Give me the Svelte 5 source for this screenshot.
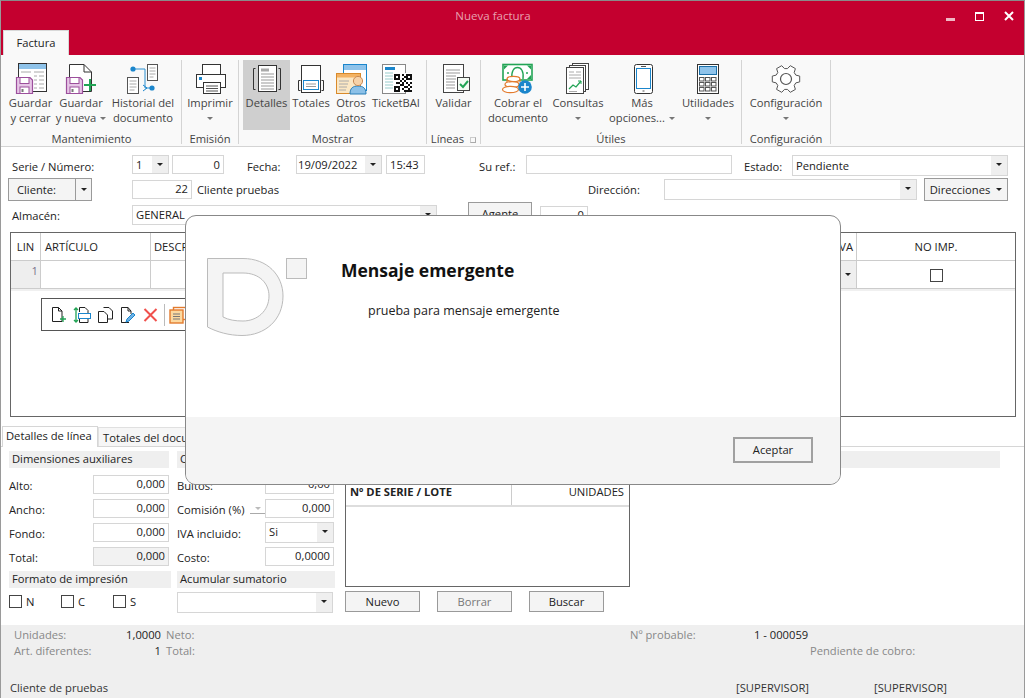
<script lang="ts">
    const GROUPS = [
        { name: 'Mantenimiento', width: 180, pad: 3, items: [
            { id: 'save', lines: ['Guardar', 'y cerrar'], w: 51 },
            { id: 'savenew', lines: ['Guardar', 'y nueva'], w: 50, caret: 'inline' },
            { id: 'history', lines: ['Historial del', 'documento'], w: 74 },
        ] },
        { name: 'Emisión', width: 57, pad: 0, items: [
            { id: 'print', lines: ['Imprimir'], w: 56, caret: 'below' },
        ] },
        { name: 'Mostrar', width: 188, pad: 4, items: [
            { id: 'details', lines: ['Detalles'], w: 47, active: true },
            { id: 'totals', lines: ['Totales'], w: 42 },
            { id: 'other', lines: ['Otros', 'datos'], w: 38 },
            { id: 'ticket', lines: ['TicketBAI'], w: 52 },
        ] },
        { name: 'Líneas', width: 54, pad: 0, launcher: true, items: [
            { id: 'validate', lines: ['Validar'], w: 53 },
        ] },
        { name: 'Útiles', width: 261, pad: 8, items: [
            { id: 'pay', lines: ['Cobrar el', 'documento'], w: 58 },
            { id: 'query', lines: ['Consultas'], w: 62, caret: 'below' },
            { id: 'phone', lines: ['Más', 'opciones...'], w: 66, caret: 'inline' },
            { id: 'calc', lines: ['Utilidades'], w: 66, caret: 'below' },
        ] },
        { name: 'Configuración', width: 89, pad: 0, items: [
            { id: 'gear', lines: ['Configuración'], w: 88, caret: 'below' },
        ] },
    ];

    // six toothed outline for the settings icon
    function gearPath(cx: number, cy: number, rOut: number, rIn: number): string {
        const pts: string[] = [];
        for (let i = 0; i < 6; i++) {
            const a = (i * Math.PI) / 3;
            const step = Math.PI / 3;
            const at = (r: number, off: number) =>
                `${(cx + r * Math.cos(a + off)).toFixed(1)} ${(cy + r * Math.sin(a + off)).toFixed(1)}`;
            pts.push(at(rIn, -step * 0.36), at(rOut, -step * 0.2), at(rOut, step * 0.2), at(rIn, step * 0.36));
        }
        return 'M' + pts.join(' L') + ' Z';
    }

    const qrCells = [
        [0,0],[1,0],[2,0],[4,0],[6,0],[7,0],[8,0],[0,1],[2,1],[5,1],[6,1],[8,1],[0,2],[1,2],[2,2],[4,2],[6,2],[7,2],[8,2],
        [3,3],[5,3],[1,4],[2,4],[4,4],[6,4],[8,4],[3,5],[4,5],[7,5],[0,6],[1,6],[2,6],[5,6],[6,6],[8,6],[0,7],[2,7],[4,7],[7,7],[0,8],[1,8],[2,8],[5,8],[6,8],[7,8],[8,8],
    ];
</script>

{#snippet floppy()}
    <path d="M2.5 15.5H16L18.5 18V31.5H2.5Z" fill="#e6c6e6" stroke="#9c4f9c" stroke-width="1.2" />
    <rect x="6" y="15.5" width="9" height="6" fill="#fff" stroke="#9c4f9c" />
    <rect x="6" y="25" width="9" height="6.5" fill="#fff" stroke="#9c4f9c" />
    <rect x="7.5" y="27" width="2" height="3" fill="#777" />
{/snippet}

{#snippet icon(id: string)}
    <svg class="ricon" width="34" height="34" viewBox="0 0 34 34" fill="none">
        {#if id === 'save'}
            <rect x="4.5" y="1.5" width="28" height="28" fill="#fff" stroke="#333" />
            <rect x="5" y="2" width="27" height="5" fill="#8fc3ea" />
            <path d="M7 10h10M20 10h10M20 14h3M25 14h5M20 18h3M25 18h5M20 22h3M25 22h5M20 26h3M25 26h5" stroke="#aaa" />
            {@render floppy()}
        {:else if id === 'savenew'}
            <path d="M5.5 2.5H20L27.5 10V29.5H5.5Z" fill="#fff" stroke="#333" />
            <path d="M20 2.5V10H27.5" stroke="#333" />
            {@render floppy()}
            <path d="M26 17V29M20 23H32" stroke="#22a455" stroke-width="2" />
        {:else if id === 'history'}
            <rect x="21.5" y="2.5" width="10" height="16" fill="#fff" stroke="#555" />
            <path d="M23.5 6h6M23.5 9h6M23.5 12h6M23.5 15h4" stroke="#aaa" />
            <rect x="1.5" y="15.5" width="11" height="16" fill="#fff" stroke="#555" />
            <path d="M3.5 19h7M3.5 22h7M3.5 25h7M3.5 28h5" stroke="#aaa" />
            <path d="M7 7H19V26H26" stroke="#2a8fd0" />
            <circle cx="7" cy="7" r="2.6" fill="#1b86cc" />
            <circle cx="26" cy="26" r="2.6" fill="#1b86cc" />
            <path d="M17 23l4 3-4 3" stroke="#1b86cc" />
        {:else if id === 'print'}
            <rect x="9.5" y="2.5" width="18" height="10" fill="#fff" stroke="#333" />
            <rect x="3.5" y="12.5" width="29" height="13" fill="#fff" stroke="#333" />
            <rect x="6" y="15" width="3" height="3" fill="#1b86cc" />
            <rect x="10.5" y="20.5" width="17" height="11" fill="#fff" stroke="#333" />
            <path d="M13 24h12M13 26.5h12M13 29h12" stroke="#555" />
        {:else if id === 'details'}
            <path d="M5.5 6.5H3.5V27.5H5.5M28.5 6.5H30.5V27.5H28.5" stroke="#333" />
            <rect x="8.5" y="3.5" width="18" height="26" fill="#fff" stroke="#333" />
            <rect x="11" y="6.5" width="8" height="3" fill="#aaa" />
            <path d="M11 12h13M11 15h13M11 18h13M11 21h13M11 24h13M11 27h13" stroke="#999" />
        {:else if id === 'totals'}
            <path d="M6.5 18.5H4.5V28.5H6.5M27.5 18.5H29.5V28.5H27.5" stroke="#333" />
            <rect x="7.5" y="3.5" width="19" height="27" fill="#fff" stroke="#333" />
            <rect x="9.5" y="18.5" width="15" height="9" fill="#fff" stroke="#1b86cc" />
            <path d="M12 22h10M12 24.5h10" stroke="#999" />
        {:else if id === 'other'}
            <rect x="9.5" y="2.5" width="23" height="26" fill="#fff" stroke="#1b86cc" />
            <rect x="10" y="3" width="22" height="5" fill="#8fc3ea" />
            <rect x="2.5" y="11.5" width="24" height="20" fill="#fbe7c4" stroke="#d98a2b" />
            <rect x="3" y="12" width="23" height="3.5" fill="#f3b263" />
            <path d="M5 19h10M5 22h9M5 25h8M5 28h7" stroke="#aaa" />
            <path d="M16 32C16 26 19 24 24 24S32 26 32 32Z" fill="#8cc1e8" stroke="#2a7fb8" />
            <circle cx="24" cy="19" r="4.6" fill="#f7d2a8" stroke="#c98a55" />
        {:else if id === 'ticket'}
            <rect x="3.5" y="2.5" width="23" height="29" fill="#fff" stroke="#888" />
            <rect x="6" y="5" width="10" height="3" fill="#1b86cc" />
            <path d="M6 11h8M6 14h8M6 17h8M6 20h8M6 23h8M6 26h8" stroke="#9cc" />
            <rect x="14" y="11" width="19" height="19" fill="#fff" />
            {#each qrCells as [cx, cy]}
                <rect x={15 + cx * 2} y={12 + cy * 2} width="2" height="2" fill="#111" />
            {/each}
        {:else if id === 'validate'}
            <rect x="6.5" y="2.5" width="20" height="28" fill="#fff" stroke="#444" />
            <path d="M9 8h14M9 11h14M9 14h10M9 17h10M9 20h9M9 23h9M9 26h9" stroke="#999" />
            <rect x="20.5" y="15.5" width="12" height="13" fill="#f4fbf4" stroke="#444" />
            <path d="M23 22l3 3 5-6" stroke="#22a455" stroke-width="2" />
        {:else if id === 'pay'}
            <rect x="2" y="2.5" width="29" height="15.5" fill="#fff" stroke="#22a455" stroke-width="1.6" />
            <path d="M11 17C10 9 13 5.5 16.5 5.5S23 9 22 17" stroke="#22a455" stroke-width="1.4" />
            <path d="M3 3.5h4l-4 4ZM30 3.5h-4l4 4ZM30 17h-4l4-4Z" fill="#22a455" />
            <circle cx="7" cy="11" r="1" fill="#22a455" />
            <circle cx="26" cy="11" r="1" fill="#22a455" />
            <ellipse cx="12.5" cy="17" rx="6.5" ry="2.6" fill="#fff" stroke="#e37b2e" stroke-width="1.2" />
            <path d="M6 17v3M19 17v3" stroke="#e37b2e" stroke-width="1.2" />
            <ellipse cx="11" cy="22.5" rx="7" ry="2.8" fill="#fff" stroke="#e37b2e" stroke-width="1.2" />
            <ellipse cx="9.5" cy="27.5" rx="8" ry="3.2" fill="#fff" stroke="#e37b2e" stroke-width="1.2" />
            <circle cx="24" cy="25" r="6.8" fill="#1b86cc" />
            <path d="M24 21V29M20 25H28" stroke="#fff" stroke-width="1.6" />
        {:else if id === 'query'}
            <rect x="11.5" y="1.5" width="16" height="26" fill="#fff" stroke="#444" />
            <rect x="8.5" y="3.5" width="16" height="26" fill="#fff" stroke="#444" />
            <rect x="5.5" y="5.5" width="17" height="26" fill="#fff" stroke="#444" />
            <path d="M8 10h5M15 10h5M8 13h12M8 16h12M8 29.5h8" stroke="#aaa" />
            <path d="M8 27l4-4 3 2 5-6" stroke="#22a455" stroke-width="1.3" />
            <path d="M17 19h3v3" stroke="#22a455" />
        {:else if id === 'phone'}
            <rect x="9.5" y="2.5" width="18" height="29" rx="2" fill="#fff" stroke="#333" />
            <rect x="11.5" y="6.5" width="14" height="20" fill="#fff" stroke="#1b86cc" />
            <path d="M16 4.5h5M17.5 29h2" stroke="#555" />
        {:else if id === 'calc'}
            <rect x="6.5" y="2.5" width="21" height="29" fill="#fff" stroke="#333" />
            <rect x="8.5" y="4.5" width="17" height="8" fill="#8fc3ea" stroke="#1b6fa8" />
            {#each [15.5, 20.5, 25.5] as y}
                {#each [8.5, 14.5, 20.5] as x}
                    <rect {x} {y} width="4.5" height="3.5" fill="#fff" stroke="#555" />
                {/each}
            {/each}
        {:else if id === 'gear'}
            <path d={gearPath(17, 17, 14, 10.5)} fill="#fff" stroke="#555" stroke-linejoin="round" />
            <circle cx="17" cy="17" r="5.5" stroke="#555" stroke-width="1.2" />
        {/if}
    </svg>
{/snippet}

{#snippet combo(value: string, cls: string)}
    <div class="field combo {cls}"><span class="val">{value}</span><span class="arrow"></span></div>
{/snippet}

<div class="window">
    <header class="titlebar">
        <div class="title">Nueva factura</div>
        <div class="controls">
            <span class="min"></span>
            <span class="max"></span>
            <svg width="10" height="10" viewBox="0 0 10 10"><path d="M1 1L9 9M9 1L1 9" stroke="#fff" stroke-width="2" /></svg>
        </div>
        <div class="tab-main">Factura</div>
    </header>

    <section class="ribbon">
        {#each GROUPS as g}
            <div class="group" style="width:{g.width}px">
                <div class="items" style="padding-left:{g.pad}px">
                    {#each g.items as it}
                        <div class="rbtn" class:active={it.active} style="width:{it.w}px">
                            {@render icon(it.id)}
                            <div class="rlabel">
                                {#each it.lines as line, i}
                                    <div>{line}{#if it.caret === 'inline' && i === it.lines.length - 1}<span class="caret inl"></span>{/if}</div>
                                {/each}
                                {#if it.caret === 'below'}<div class="caret-row"><span class="caret"></span></div>{/if}
                            </div>
                        </div>
                    {/each}
                </div>
                <div class="gname">{g.name}{#if g.launcher}<span class="launcher"></span>{/if}</div>
            </div>
        {/each}
    </section>

    <section class="form">
        <div class="row r1">
            <span class="lbl l-serie">Serie / Número:</span>
            {@render combo('1', 'c-serie')}
            <div class="field num f-num">0</div>
            <span class="lbl l-fecha">Fecha:</span>
            {@render combo('19/09/2022', 'c-date')}
            <div class="field f-time">15:43</div>
            <span class="lbl l-ref">Su ref.:</span>
            <div class="field f-ref"></div>
            <span class="lbl l-estado">Estado:</span>
            {@render combo('Pendiente', 'c-estado')}
        </div>
        <div class="row r2">
            <div class="btn split b-cliente"><span>Cliente:</span><span class="split-arrow"><i class="arrow-ico"></i></span></div>
            <div class="field num f-cli">22</div>
            <span class="lbl l-cli">Cliente pruebas</span>
            <span class="lbl l-dir">Dirección:</span>
            {@render combo('', 'c-dir')}
            <div class="btn b-dirs">Direcciones<i class="arrow-ico"></i></div>
        </div>
        <div class="row r3">
            <span class="lbl l-alm">Almacén:</span>
            {@render combo('GENERAL', 'c-alm')}
            <div class="btn b-agente">Agente</div>
            <div class="field num f-agente">0</div>
        </div>
    </section>

    <section class="lines">
        <div class="lhead">
            <div class="lin">LIN</div>
            <div class="art">ARTÍCULO</div>
            <div class="desc">DESCRIPCIÓN</div>
            <div class="iva">IVA</div>
            <div class="noimp">NO IMP.</div>
        </div>
        <div class="lrow">
            <div class="lin n">1</div>
            <div class="art"></div>
            <div class="desc"></div>
            <div class="iva"><span class="iva-arrow"><i class="arrow-ico"></i></span></div>
            <div class="noimp"><span class="check dark"></span></div>
        </div>
        <div class="toolbar">
            <svg width="16" height="18" viewBox="0 0 16 18" fill="none"><path d="M1.5 1.5H7.5L11 5V15.5H1.5Z" stroke="#222" /><path d="M7.5 1.5V5H11" stroke="#222" /><path d="M12 10V16M9 13H15" stroke="#22a455" stroke-width="1.3" /></svg>
            <svg width="18" height="18" viewBox="0 0 18 18" fill="none"><path d="M6.5 1.5H12L15 4.5V7M6.5 1.5V6M6.5 13V16.5H15V13" stroke="#222" /><rect x="5.5" y="7.5" width="12" height="5" stroke="#1b86cc" /><path d="M3 2V15M1 4L3 2L5 4M1 14L3 16L5 14" stroke="#22a455" stroke-width="1.3" /></svg>
            <svg width="17" height="18" viewBox="0 0 17 18" fill="none"><path d="M6.5 1.5H12L15.5 5V13H11" stroke="#222" /><path d="M1.5 5.5H7L10.5 9V16.5H1.5Z" fill="#fff" stroke="#222" /></svg>
            <svg width="17" height="18" viewBox="0 0 17 18" fill="none"><path d="M1.5 1.5H8L11 5V8M9 16.5H1.5Z" stroke="#222" /><path d="M1.5 1.5V16.5M8 1.5V5H11" stroke="#222" /><path d="M6 16L7 13L13 7L15 9L9 15Z" fill="#6db1e6" stroke="#1b86cc" /></svg>
            <svg width="15" height="18" viewBox="0 0 15 18" fill="none"><path d="M1.5 3L13.5 15M13.5 3L1.5 15" stroke="#f0504c" stroke-width="2" /></svg>
            <span class="tsep"></span>
            <svg width="22" height="18" viewBox="0 0 22 18" fill="none"><rect x="4.5" y="1.5" width="14" height="12" fill="#fff" stroke="#e37b2e" stroke-width="1.4" /><rect x="1" y="4" width="13" height="13" fill="#fcd9a0" stroke="#e37b2e" stroke-width="1.4" /><path d="M4 8h7M4 10.5h7M4 13h7" stroke="#777" /></svg>
        </div>
    </section>

    <section class="tabs">
        <div class="tab on">Detalles de línea</div>
        <div class="tab">Totales del documento</div>
    </section>

    <section class="details">
        <div class="col-a">
            <div class="sect">Dimensiones auxiliares</div>
            <div class="frow"><span>Alto:</span><div class="field num">0,000</div></div>
            <div class="frow"><span>Ancho:</span><div class="field num">0,000</div></div>
            <div class="frow"><span>Fondo:</span><div class="field num">0,000</div></div>
            <div class="frow"><span>Total:</span><div class="field num off">0,000</div></div>
            <div class="sect s2">Formato de impresión</div>
            <div class="checks">
                <label><span class="check"></span>N</label>
                <label><span class="check"></span>C</label>
                <label><span class="check"></span>S</label>
            </div>
        </div>
        <div class="col-b">
            <div class="sect">Comercial</div>
            <div class="frow"><span>Bultos:</span><div class="field num">0,00</div></div>
            <div class="frow"><span>Comisión (%)<i class="mini"></i></span><div class="field num">0,000</div></div>
            <div class="frow"><span>IVA incluido:</span>{@render combo('Si', 'c-iva')}</div>
            <div class="frow"><span>Costo:</span><div class="field num">0,0000</div></div>
            <div class="sect s2">Acumular sumatorio</div>
            {@render combo('', 'c-acum')}
        </div>
        <div class="col-c">
            <div class="serials">
                <div class="shead"><b>Nº DE SERIE / LOTE</b><span>UNIDADES</span></div>
            </div>
            <div class="sbtns">
                <div class="btn">Nuevo</div>
                <div class="btn dim">Borrar</div>
                <div class="btn">Buscar</div>
            </div>
        </div>
        <div class="col-d"><div class="sect"></div></div>
    </section>

    <footer class="foot">
        <div class="frow1">
            <span class="k w-k">Unidades:</span><span class="v w-v">1,0000</span><span class="k w-n">Neto:</span>
            <span class="k w-p">Nº probable:</span><span class="v2">1 - 000059</span>
        </div>
        <div class="frow1">
            <span class="k w-k">Art. diferentes:</span><span class="v w-v">1</span><span class="k w-n">Total:</span>
            <span class="k pend">Pendiente de cobro:</span>
        </div>
        <div class="frow3">
            <span class="cli">Cliente de pruebas</span>
            <span class="sup s-a">[SUPERVISOR]</span>
            <span class="sup s-b">[SUPERVISOR]</span>
        </div>
    </footer>

    <div class="dialog">
        <div class="dbody">
            <svg class="logo" width="101" height="79" viewBox="0 0 101 79">
                <path fill-rule="evenodd" d="M.5.5H36C60 .5 76 17 76 38C76 62 58 77.5 35 77.5C22 77.5 10 74 .5 69ZM16 15V59C22 62 28 63 36 63C50 63 62 53 62 38C62 25 52 15 36 15Z" fill="#f4f4f4" stroke="#bbb" />
                <rect x="79.5" y=".5" width="20" height="20" fill="#f4f4f4" stroke="#bbb" />
            </svg>
            <div class="dtext">
                <div class="dtitle">Mensaje emergente</div>
                <div class="dmsg">prueba para mensaje emergente</div>
            </div>
        </div>
        <div class="dfoot"><div class="accept">Aceptar</div></div>
    </div>
</div>

<style>
    :global(body) {
        margin: 0;
        background: #fff;
    }

    * {
        box-sizing: border-box;
    }

    .window {
        position: relative;
        width: 1025px;
        height: 698px;
        overflow: hidden;
        background: #fff;
        border-top: 1px solid #8a8a8a;
        border-left: 1px solid #9a9a9a;
        border-right: 1px solid #9a9a9a;
        font-family: "Open Sans", "Noto Sans", sans-serif;
        font-size: 11.2px;
        color: #222;
    }

    /* title bar */
    .titlebar {
        position: relative;
        height: 54px;
        background: #c4002f;
    }

    .title {
        padding-top: 7px;
        text-align: center;
        color: #e8a0b0;
        font-size: 11.5px;
        margin-left: -39px;
    }

    .controls {
        position: absolute;
        top: 10px;
        right: 10px;
        display: flex;
        align-items: center;
        gap: 20px;
    }

    .min {
        width: 9px;
        height: 3px;
        margin-top: 6px;
        background: #f0b8c4;
    }

    .max {
        width: 9px;
        height: 9px;
        border: 1px solid #fff;
        border-top-width: 2px;
    }

    .tab-main {
        position: absolute;
        left: 2px;
        bottom: 0;
        width: 66px;
        height: 25px;
        line-height: 24px;
        text-align: center;
        background: #f9f9f9;
        border: 1px solid #d8d8d8;
        border-bottom: 0;
        color: #222;
    }

    /* ribbon */
    .ribbon {
        display: flex;
        height: 92px;
        padding: 5px 0 0 1px;
        background: #f9f9f9;
        border-bottom: 1px solid #d4d4d4;
    }

    .group {
        position: relative;
        height: 84px;
        border-right: 1px solid #d4d4d4;
    }

    .items {
        display: flex;
        height: 70px;
    }

    .rbtn {
        display: flex;
        flex-direction: column;
        align-items: center;
        padding-top: 2px;
        flex: none;
        color: #444;
        line-height: 15px;
    }

    .rbtn.active {
        background: #cfcfcf;
    }

    .ricon {
        flex: none;
    }

    .rlabel {
        margin-top: -1px;
        text-align: center;
        white-space: nowrap;
    }

    .caret-row {
        height: 15px;
    }

    .caret {
        display: inline-block;
        width: 0;
        height: 0;
        border-left: 3px solid transparent;
        border-right: 3px solid transparent;
        border-top: 3px solid #777;
        vertical-align: 2px;
    }

    .caret.inl {
        margin-left: 4px;
    }

    .gname {
        position: absolute;
        left: 0;
        right: 0;
        bottom: -1px;
        text-align: center;
        color: #444;
        line-height: 12px;
    }

    .launcher {
        display: inline-block;
        width: 6px;
        height: 6px;
        margin-left: 6px;
        border: 1px solid #aaa;
        border-top-color: #ccc;
        border-left-color: #ccc;
    }

    /* header form */
    .form {
        height: 85px;
        padding-top: 8px;
    }

    .row {
        display: flex;
    }

    .r1 {
        height: 22px;
        padding-left: 11px;
        align-items: flex-start;
    }

    .r1 .lbl {
        line-height: 24px;
    }

    .r1 .field {
        line-height: 17px;
    }

    .r2 {
        height: 24px;
        padding-left: 7px;
        align-items: center;
    }

    .r3 {
        height: 26px;
        padding: 2px 0 0 11px;
        align-items: center;
    }

    .lbl {
        flex: none;
        white-space: nowrap;
    }

    .field {
        flex: none;
        height: 19px;
        line-height: 16px;
        padding: 0 3px;
        border: 1px solid #d6d6d6;
        background: #fff;
        white-space: nowrap;
    }

    .num {
        text-align: right;
    }

    .off {
        background: #f2f2f2;
    }

    .combo {
        display: flex;
        align-items: stretch;
        padding: 0 0 0 3px;
    }

    .combo .val {
        flex: 1;
        align-self: center;
    }

    .arrow {
        position: relative;
        width: 16px;
        background: #efefef;
    }

    .arrow::after,
    .arrow-ico {
        content: '';
        display: inline-block;
        width: 0;
        height: 0;
        border-left: 3px solid transparent;
        border-right: 3px solid transparent;
        border-top: 3px solid #222;
    }

    .arrow::after {
        position: absolute;
        left: 5px;
        top: 7px;
    }

    .btn {
        flex: none;
        display: flex;
        align-items: center;
        justify-content: center;
        height: 23px;
        border: 1px solid #9a9a9a;
        background: #f4f4f4;
        white-space: nowrap;
    }

    .l-serie { width: 120px; }
    .c-serie { width: 37px; }
    .f-num { width: 52px; margin-left: 3px; }
    .l-fecha { width: 49px; margin-left: 23px; }
    .c-date { width: 86px; padding-left: 1px; }
    .f-time { width: 39px; margin-left: 4px; }
    .l-ref { width: 47px; margin-left: 54px; }
    .f-ref { width: 206px; }
    .l-estado { width: 48px; margin-left: 12px; }
    .c-estado { width: 216px; height: 21px; }

    .b-cliente { width: 84px; justify-content: flex-start; padding-left: 8px; }
    .split span:first-child { flex: 1; }
    .split-arrow {
        width: 16px;
        height: 100%;
        display: flex;
        align-items: center;
        justify-content: center;
        border-left: 1px solid #9a9a9a;
    }
    .f-cli { width: 60px; margin-left: 40px; }
    .l-cli { width: 180px; margin-left: 5px; }
    .l-dir { width: 76px; margin-left: 211px; }
    .c-dir { width: 253px; height: 21px; }
    .b-dirs { width: 84px; margin-left: 7px; }
    .b-dirs .arrow-ico { margin-left: 6px; }

    .l-alm { width: 120px; }
    .c-alm { width: 305px; height: 20px; }
    .b-agente { width: 64px; margin: -3px 0 0 31px; }
    .f-agente { width: 48px; margin-left: 8px; }

    /* line grid */
    .lines {
        position: relative;
        height: 185px;
        margin: 0 8px 0 9px;
        border: 1px solid #666;
    }

    .lhead,
    .lrow {
        display: flex;
    }

    .lhead {
        height: 28px;
        line-height: 27px;
        border-bottom: 1px solid #ccc;
    }

    .lrow {
        height: 30px;
        border-bottom: 2px solid #f0f0f0;
    }

    .lhead > div,
    .lrow > div {
        height: 100%;
        flex: none;
        border-right: 1px solid #ccc;
    }

    .lrow > div {
        border-bottom: 1px solid #ccc;
    }

    .lin { width: 30px; text-align: center; }
    .lin.n { text-align: right; padding: 0 2px 0 0; background: #eee; color: #7a6f8a; line-height: 20px; }
    .art { width: 110px; padding-left: 4px; }
    .desc { width: 680px; padding-left: 3px; }
    .iva { width: 26px; text-align: right; padding-right: 3px; }
    .lrow .iva { padding: 0; display: flex; justify-content: flex-end; }
    .iva-arrow { width: 16px; background: #efefef; display: flex; align-items: center; justify-content: center; }
    .noimp {
        width: 158px;
        text-align: center;
        border-right: 0 !important;
    }
    .lrow .noimp { display: flex; align-items: flex-start; justify-content: center; padding-top: 8px; }

    .check {
        display: inline-block;
        width: 13px;
        height: 13px;
        border: 1px solid #444;
        background: #fff;
    }

    .toolbar {
        position: absolute;
        left: 30px;
        top: 65px;
        width: 220px;
        height: 33px;
        display: flex;
        align-items: center;
        gap: 6px;
        padding-left: 9px;
        border: 1px solid #555;
        background: #fff;
    }

    .tsep {
        width: 1px;
        height: 22px;
        margin-right: -2px;
        background: #bbb;
    }

    /* lower tabs */
    .tabs {
        display: flex;
        align-items: flex-end;
        height: 30px;
        padding: 9px 0 0 1px;
        border-bottom: 1px solid #d6d6d6;
    }

    .tab {
        height: 19px;
        padding: 0 4px;
        line-height: 19px;
        background: #f6f6f6;
        border: 1px solid #e0e0e0;
        border-bottom: 0;
        white-space: nowrap;
    }

    .tab.on {
        width: 96px;
        height: 21px;
        padding: 0 0 0 3px;
        line-height: 17px;
        background: #fff;
        border-color: #d6d6d6;
        margin-bottom: -1px;
        position: relative;
    }

    /* lower panels */
    .details {
        display: flex;
        height: 178px;
        padding: 4px 0 0 8px;
    }

    .sect {
        height: 17px;
        line-height: 16px;
        padding-left: 3px;
        background: #efefef;
    }

    .sect.s2 {
        margin-top: 3px;
    }

    .frow {
        display: flex;
        align-items: center;
        justify-content: space-between;
        height: 24px;
    }

    .frow > span:first-child {
        margin-top: 3px;
        white-space: nowrap;
    }

    .col-a {
        width: 162px;
    }

    .col-a .sect:first-child {
        width: 160px;
        margin-bottom: 4px;
    }

    .col-a .frow .field {
        width: 76px;
        margin-right: 2px;
    }

    .checks {
        display: flex;
        margin-top: 6px;
    }

    .checks label {
        display: flex;
        align-items: center;
        width: 52px;
        gap: 4px;
    }

    .col-b {
        width: 158px;
        margin-left: 6px;
    }

    .col-b .sect:first-child {
        margin-bottom: 4px;
    }

    .col-b .frow .field {
        width: 69px;
        margin-right: 1px;
    }

    .mini {
        position: relative;
        display: inline-block;
        width: 15px;
        height: 10px;
        margin-left: 6px;
        border-bottom: 1px solid #aaa;
    }

    .mini::after {
        content: '';
        position: absolute;
        left: 5px;
        top: 3px;
        border-left: 3px solid transparent;
        border-right: 3px solid transparent;
        border-top: 3px solid #bbb;
    }

    .c-iva {
        height: 21px;
    }

    .c-acum {
        width: 156px;
        height: 21px;
        margin-top: 4px;
    }

    .col-c {
        width: 285px;
        margin-left: 10px;
    }

    .serials {
        height: 131px;
        margin-top: 5px;
        border: 1px solid #666;
        border-top: 0;
    }

    .shead {
        display: flex;
        justify-content: space-between;
        height: 51px;
        padding: 28px 5px 0 4px;
        line-height: 16px;
        border-bottom: 2px solid #ddd;
        background: linear-gradient(90deg, transparent 165px, #ccc 165px, #ccc 166px, transparent 166px);
    }

    .sbtns {
        display: flex;
        gap: 17px;
        margin-top: 4px;
    }

    .sbtns .btn {
        width: 75px;
        height: 21px;
    }

    .dim {
        color: #777;
    }

    .col-d {
        width: 370px;
    }

    /* footer */
    .foot {
        height: 73px;
        padding: 2px 0 0 13px;
        background: #efefef;
        color: #888;
    }

    .frow1 {
        display: flex;
        height: 16px;
        line-height: 16px;
        white-space: nowrap;
    }

    .frow3 {
        display: flex;
        height: 16px;
        line-height: 16px;
        margin: 21px 0 0 -4px;
        color: #333;
        white-space: nowrap;
    }

    .k, .v, .v2, .sup, .cli {
        flex: none;
    }

    .w-k { width: 105px; }
    .w-v { width: 42px; text-align: right; color: #222; }
    .w-n { margin-left: 5px; width: 464px; }
    .w-p { width: 124px; }
    .v2 { color: #222; }
    .pend { margin-left: 180px; }
    .cli { width: 726px; }
    .s-a { width: 138px; }

    /* modal message */
    .dialog {
        position: absolute;
        left: 184px;
        top: 214px;
        width: 656px;
        height: 270px;
        display: flex;
        flex-direction: column;
        overflow: hidden;
        background: #fff;
        border: 1px solid #888;
        border-radius: 11px;
    }

    .dbody {
        flex: 1;
        display: flex;
        padding: 42px 0 0 21px;
    }

    .logo {
        flex: none;
    }

    .dtext {
        margin-left: 33px;
    }

    .dtitle {
        font-size: 17.5px;
        font-weight: 700;
        line-height: 24px;
        color: #111;
    }

    .dmsg {
        margin: 20px 0 0 27px;
        font-size: 12.5px;
        line-height: 18px;
    }

    .dfoot {
        display: flex;
        justify-content: flex-end;
        height: 67px;
        padding: 20px 27px 0 0;
        background: #f4f4f4;
    }

    .accept {
        width: 80px;
        height: 26px;
        line-height: 22px;
        text-align: center;
        border: 2px solid #a0a0a0;
    }
</style>
